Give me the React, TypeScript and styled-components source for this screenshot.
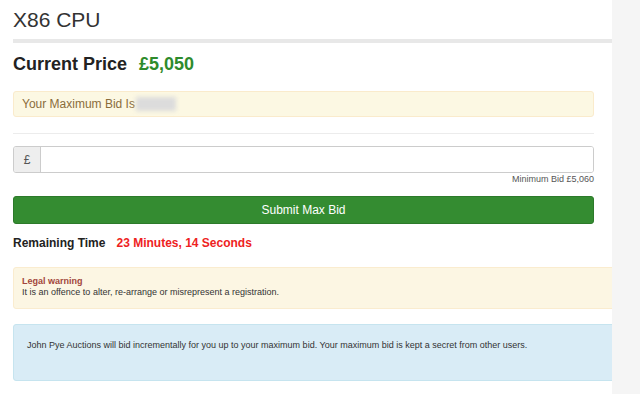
import styled, { createGlobalStyle } from 'styled-components';

const GlobalStyle = createGlobalStyle`
  html, body {
    margin: 0;
    padding: 0;
    background: #ffffff;
    font-family: "Liberation Sans", Arial, sans-serif;
    color: #333333;
  }
`;

const Page = styled.div`
  display: flex;
  width: 640px;
  height: 394px;
  overflow: hidden;
`;

const Main = styled.div`
  width: 612px;
  flex-shrink: 0;
  padding-left: 13px;
  box-sizing: border-box;
  overflow: hidden;
  background: #ffffff;
`;

const Side = styled.div`
  flex: 1;
  background: #f5f5f5;
`;

const Title = styled.h1`
  margin: 0;
  padding-top: 8px;
  font-size: 21px;
  line-height: 23px;
  font-weight: 400;
  color: #333;
`;

const Rule = styled.div`
  margin-top: 8px;
  height: 4px;
  background: #e8e8e8;
`;

const PriceRow = styled.div`
  margin-top: 11px;
  display: flex;
  gap: 12px;
  font-size: 18px;
  line-height: 20px;
  font-weight: 700;
  color: #222;
`;

const Price = styled.span`
  color: #2e8b2c;
`;

const Form = styled.div`
  width: 581px;
  margin-top: 17px;
`;

const Notice = styled.div`
  display: flex;
  align-items: center;
  height: 26px;
  box-sizing: border-box;
  padding: 0 8px;
  background: #fcf8e3;
  border: 1px solid #faebcc;
  border-radius: 3px;
  font-size: 12px;
  color: #8a6d3b;
`;

const Hidden = styled.span`
  display: inline-block;
  width: 40px;
  height: 14px;
  margin-left: 1px;
  background: #dcdcdc;
  filter: blur(2px);
`;

const Divider = styled.div`
  margin-top: 16px;
  height: 1px;
  background: #ececec;
`;

const InputGroup = styled.div`
  display: flex;
  margin-top: 12px;
  height: 27px;
  border: 1px solid #cccccc;
  border-radius: 3px;
  box-sizing: border-box;
  overflow: hidden;
`;

const Addon = styled.span`
  width: 26px;
  display: flex;
  align-items: center;
  justify-content: center;
  background: #eeeeee;
  border-right: 1px solid #cccccc;
  font-size: 12px;
  color: #555;
`;

const Input = styled.input`
  flex: 1;
  border: none;
  outline: none;
  padding: 0 8px;
  font-family: inherit;
  font-size: 12px;
`;

const Hint = styled.div`
  margin-top: 0;
  text-align: right;
  font-size: 9px;
  line-height: 12px;
  color: #555;
`;

const SubmitButton = styled.button`
  display: block;
  width: 100%;
  margin-top: 11px;
  height: 28px;
  background: #348c31;
  border: 1px solid #2c7a2a;
  border-radius: 3px;
  color: #ffffff;
  font-family: inherit;
  font-size: 12px;
`;

const TimeRow = styled.div`
  margin-top: 12px;
  display: flex;
  gap: 11px;
  font-size: 12px;
  line-height: 14px;
  font-weight: 700;
  color: #222;
`;

const Countdown = styled.span`
  color: #ee2222;
`;

const Alert = styled.div<{ $tone: 'warning' | 'info' }>`
  margin-right: -10px;
  border-radius: 3px;
  font-size: 9px;
  line-height: 11px;
  color: #333;
  background: ${p => (p.$tone === 'warning' ? '#fcf6e3' : '#d9ecf6')};
  border: 1px solid ${p => (p.$tone === 'warning' ? '#faeccf' : '#c6e4ef')};
`;

const WarningBox = styled(Alert)`
  margin-top: 17px;
  height: 42px;
  box-sizing: border-box;
  padding: 8px 8px;
`;

const WarningTitle = styled.div`
  font-weight: 700;
  color: #a2463c;
`;

const InfoBox = styled(Alert)`
  margin-top: 15px;
  height: 57px;
  box-sizing: border-box;
  padding: 15px 13px;
`;

const App = () => {
  return (
    <Page>
      <GlobalStyle />
      <Main>
        <Title>X86 CPU</Title>
        <Rule />
        <PriceRow>
          Current Price <Price>£5,050</Price>
        </PriceRow>
        <Form>
          <Notice>
            Your Maximum Bid Is<Hidden />
          </Notice>
          <Divider />
          <InputGroup>
            <Addon>£</Addon>
            <Input type='text' />
          </InputGroup>
          <Hint>Minimum Bid £5,060</Hint>
          <SubmitButton>Submit Max Bid</SubmitButton>
          <TimeRow>
            Remaining Time <Countdown>23 Minutes, 14 Seconds</Countdown>
          </TimeRow>
        </Form>
        <WarningBox $tone='warning'>
          <WarningTitle>Legal warning</WarningTitle>
          It is an offence to alter, re-arrange or misrepresent a registration.
        </WarningBox>
        <InfoBox $tone='info'>
          John Pye Auctions will bid incrementally for you up to your maximum bid. Your maximum bid is kept a secret from other users.
        </InfoBox>
      </Main>
      <Side />
    </Page>
  );
};

export default App;
